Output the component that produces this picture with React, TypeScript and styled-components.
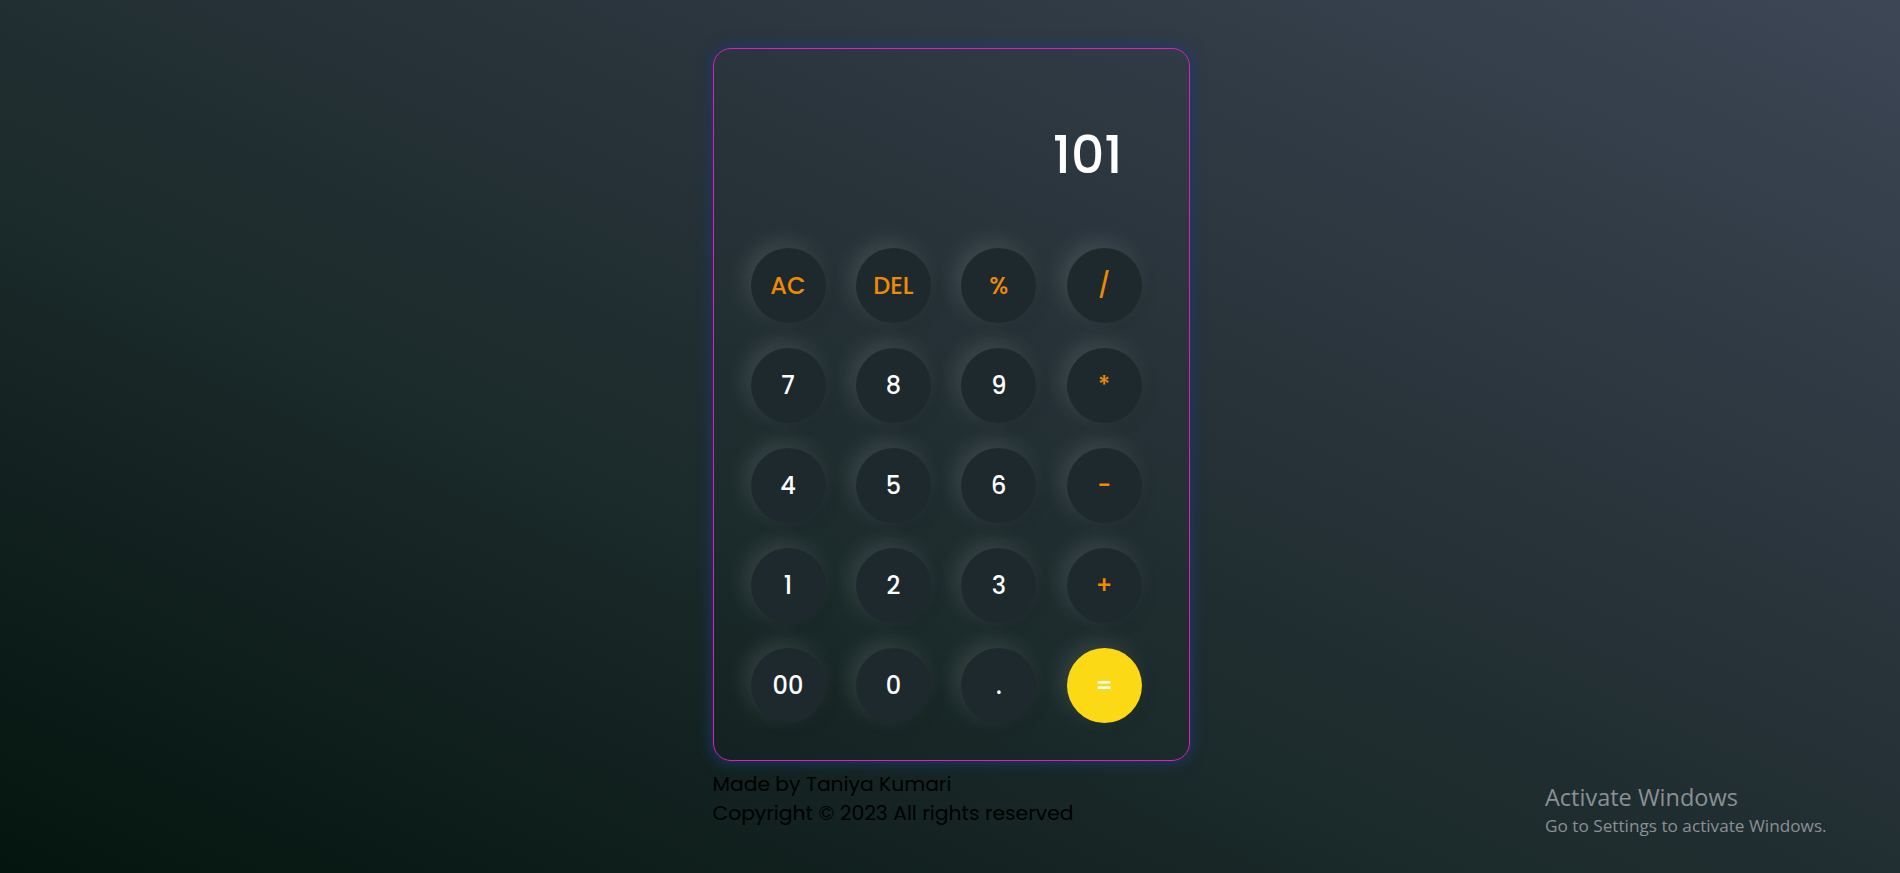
import React from "react";
import styled, { createGlobalStyle } from "styled-components";

const Global = createGlobalStyle`
  html, body { margin: 0; padding: 0; }
  body {
    font-family: "Poppins", "Inter", "Noto Sans", sans-serif;
    background: #1c2529;
  }
  * { box-sizing: border-box; }
`;

const Page = styled.div`
  position: relative;
  width: 100%;
  height: 873px;
  overflow: hidden;
  background: linear-gradient(to top right, #04140e 0%, #1b2a2a 38%, #28333a 62%, #3d4655 100%);
  display: flex;
  flex-direction: column;
  align-items: center;
  padding-top: 48px;
  padding-left: 2px;
`;

const Wrap = styled.div`
  width: 477px;
  display: flex;
  flex-direction: column;
`;

const Card = styled.div`
  width: 477px;
  height: 713px;
  border: 1px solid #e41bbd;
  border-radius: 18px;
  box-shadow: 0 0 14px 2px rgba(28, 58, 110, 0.85);
  display: flex;
  flex-direction: column;
  padding: 0 46px 37px 37px;
`;

const Display = styled.div`
  height: 199px;
  display: flex;
  align-items: center;
  justify-content: flex-end;
  padding-right: 20px;
  padding-top: 12px;
  color: #ffffff;
  font-size: 52px;
  font-weight: 500;
`;

const Keys = styled.div`
  display: grid;
  grid-template-columns: repeat(4, 75px);
  grid-auto-rows: 75px;
  column-gap: 30.4px;
  row-gap: 25px;
`;

const Key = styled.button<{ $op?: boolean; $eq?: boolean }>`
  width: 75px;
  height: 75px;
  border-radius: 50%;
  border: none;
  padding: 0;
  font-family: inherit;
  font-size: 24px;
  font-weight: 500;
  display: flex;
  align-items: center;
  justify-content: center;
  color: ${(p) => (p.$eq ? "#ffffff" : p.$op ? "#f08a05" : "#ffffff")};
  background: ${(p) => (p.$eq ? "#fbd914" : "#1e292e")};
  box-shadow: -6px -6px 22px rgba(255, 255, 255, 0.12), 5px 5px 14px rgba(0, 0, 0, 0.08);
`;

const Footer = styled.div`
  margin-top: 9px;
  color: #000;
  font-size: 20.3px;
  line-height: 29px;
`;

const Watermark = styled.div`
  position: absolute;
  left: 1545px;
  top: 782px;
  font-family: "Open Sans", "Noto Sans", sans-serif;
  color: #8b9095;
`;

const WmTitle = styled.div`
  font-size: 23.5px;
  line-height: 30px;
`;

const WmSub = styled.div`
  font-size: 17.2px;
  line-height: 24px;
  margin-top: 2px;
`;

const keys: { label: string; op?: boolean; eq?: boolean }[] = [
  { label: "AC", op: true },
  { label: "DEL", op: true },
  { label: "%", op: true },
  { label: "/", op: true },
  { label: "7" },
  { label: "8" },
  { label: "9" },
  { label: "*", op: true },
  { label: "4" },
  { label: "5" },
  { label: "6" },
  { label: "-", op: true },
  { label: "1" },
  { label: "2" },
  { label: "3" },
  { label: "+", op: true },
  { label: "00" },
  { label: "0" },
  { label: "." },
  { label: "=", eq: true },
];

export default function App() {
  return (
    <Page>
      <Global />
      <Wrap>
        <Card>
          <Display>101</Display>
          <Keys>
            {keys.map((k) => (
              <Key key={k.label} $op={k.op} $eq={k.eq}>
                {k.label}
              </Key>
            ))}
          </Keys>
        </Card>
        <Footer>
          <div>Made by Taniya Kumari</div>
          <div>Copyright © 2023 All rights reserved</div>
        </Footer>
      </Wrap>
      <Watermark>
        <WmTitle>Activate Windows</WmTitle>
        <WmSub>Go to Settings to activate Windows.</WmSub>
      </Watermark>
    </Page>
  );
}
